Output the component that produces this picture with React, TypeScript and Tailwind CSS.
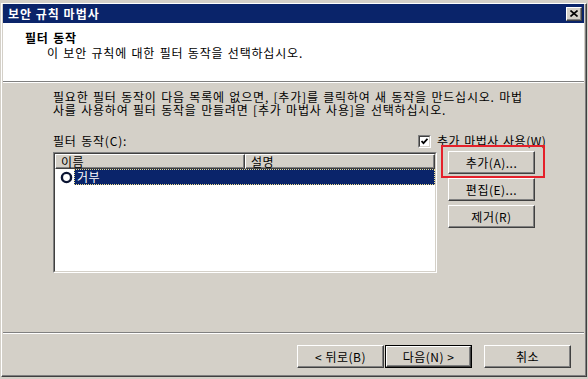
import * as React from "react";

const font = "font-['Noto_Sans_CJK_KR','Noto_Sans',sans-serif]";

function Btn({ label, isDefault, className }: { label: string; isDefault?: boolean; className?: string }) {
    const inner = (
        <div className="h-full w-full border border-t-white border-l-white border-r-[#404040] border-b-[#404040] shadow-[inset_-1px_-1px_0_#808080] flex items-center justify-center text-[12px] leading-none text-black tracking-[0.5px]">
            {label}
        </div>
    );
    return isDefault ? (
        <div className={`w-[87px] h-[23px] border border-black ${className || ""}`}>{inner}</div>
    ) : (
        <div className={`w-[87px] h-[23px] ${className || ""}`}>{inner}</div>
    );
}

export default function App() {
    return (
        <div className={`w-[588px] h-[379px] bg-[#d4d0c8] overflow-hidden ${font}`}>
            <div className="h-[3px] bg-[#d4d0c8]" />
            <div className="ml-px w-[586px] h-[374px] border border-t-white border-l-white border-r-[#404040] border-b-[#404040]">
                <div className="h-full flex flex-col border-r border-b border-[#808080] px-px pb-px">
                    {/* title bar */}
                    <div className="h-[19px] bg-[#0a246a] flex items-center justify-between pl-[5px] pr-[2px]">
                        <span className="text-white font-bold text-[12px] leading-none tracking-[1px]">보안 규칙 마법사</span>
                        <div className="w-[16px] h-[14px] bg-[#d4d0c8] border border-t-white border-l-white border-r-[#404040] border-b-[#404040] shadow-[inset_-1px_-1px_0_#808080] flex items-center justify-center">
                            <svg width="8" height="7" viewBox="0 0 8 7">
                                <path d="M0.5 0.5 L7.5 6.5 M7.5 0.5 L0.5 6.5" stroke="#000" strokeWidth="1.6" />
                            </svg>
                        </div>
                    </div>

                    {/* header */}
                    <div className="h-[59px] bg-white border-b border-[#808080] pl-[22px] pt-[8px] tracking-[0.8px] [word-spacing:1px]">
                        <div className="text-[12px] leading-[14px] font-bold text-black">필터 동작</div>
                        <div className="ml-[22px] mt-px text-[12px] leading-[14px] text-black">
                            이 보안 규칙에 대한 필터 동작을 선택하십시오.
                        </div>
                    </div>
                    <div className="h-px bg-white" />

                    {/* body */}
                    <div className="flex-1 pl-[50px] pt-[8px] text-[12px] text-black tracking-[0.8px] [word-spacing:1px]">
                        <div className="leading-[12.5px] whitespace-nowrap">
                            <div>필요한 필터 동작이 다음 목록에 없으면, [추가]를 클릭하여 새 동작을 만드십시오. 마법</div>
                            <div>사를 사용하여 필터 동작을 만들려면 [추가 마법사 사용]을 선택하십시오.</div>
                        </div>

                        <div className="mt-[18px] grid grid-cols-[365px_auto] items-center h-[14px]">
                            <span className="leading-none">필터 동작(C):</span>
                            <div className="flex items-center gap-[6px]">
                                <div className="w-[13px] h-[13px] border border-t-[#808080] border-l-[#808080] border-r-white border-b-white">
                                    <div className="w-full h-full bg-white border border-t-[#404040] border-l-[#404040] border-r-[#d4d0c8] border-b-[#d4d0c8] flex items-center justify-center">
                                        <svg width="7" height="7" viewBox="0 0 7 7">
                                            <path d="M0.5 3 L2.5 5.2 L6.5 0.8" stroke="#000" strokeWidth="1.8" fill="none" />
                                        </svg>
                                    </div>
                                </div>
                                <span className="leading-none whitespace-nowrap tracking-[0.5px]">추가 마법사 사용(W)</span>
                            </div>
                        </div>

                        <div className="mt-[3px] flex items-start tracking-[0.5px]">
                            {/* list */}
                            <div className="mt-px w-[384px] h-[121px] border border-t-[#808080] border-l-[#808080] border-r-white border-b-white">
                                <div className="w-full h-full bg-white border border-t-[#404040] border-l-[#404040] border-r-[#d4d0c8] border-b-[#d4d0c8]">
                                    <div className="flex h-[15px]">
                                        <div className="w-[190px] h-full bg-[#d4d0c8] border border-t-white border-l-white border-r-[#404040] border-b-[#404040] shadow-[inset_-1px_-1px_0_#808080] pl-[5px] flex items-center leading-none">
                                            이름
                                        </div>
                                        <div className="flex-1 h-full bg-[#d4d0c8] border border-t-white border-l-white border-r-[#404040] border-b-[#404040] shadow-[inset_-1px_-1px_0_#808080] pl-[5px] flex items-center leading-none">
                                            설명
                                        </div>
                                    </div>
                                    <div className="flex items-center h-[16px] pl-[5px]">
                                        <svg width="13" height="13" viewBox="0 0 13 13" className="shrink-0">
                                            <circle cx="6.5" cy="6.5" r="4.6" fill="#fff" stroke="#0b1533" strokeWidth="2.4" />
                                        </svg>
                                        <div className="ml-px flex-1 h-[16px] bg-[#0a246a] border border-dotted border-[#f0e08a] text-white flex items-center pl-[2px] leading-none">
                                            거부
                                        </div>
                                    </div>
                                </div>
                            </div>

                            {/* side buttons */}
                            <div className="ml-[11px] flex flex-col gap-[4px]">
                                <div className="relative">
                                    <Btn label="추가(A)..." />
                                    <div className="absolute -left-[7px] -top-[6px] w-[104px] h-[33px] border-2 border-[#e5202a]" />
                                </div>
                                <Btn label="편집(E)..." />
                                <Btn label="제거(R)" />
                            </div>
                        </div>
                    </div>

                    {/* separator */}
                    <div className="h-px bg-[#808080]" />
                    <div className="h-px bg-white" />

                    {/* footer */}
                    <div className="h-[40px] flex justify-end items-start pt-[11px] pr-[13px]">
                        <Btn label="< 뒤로(B)" />
                        <Btn label="다음(N) >" isDefault className="ml-px" />
                        <Btn label="취소" className="ml-[12px]" />
                    </div>
                </div>
            </div>
        </div>
    );
}
